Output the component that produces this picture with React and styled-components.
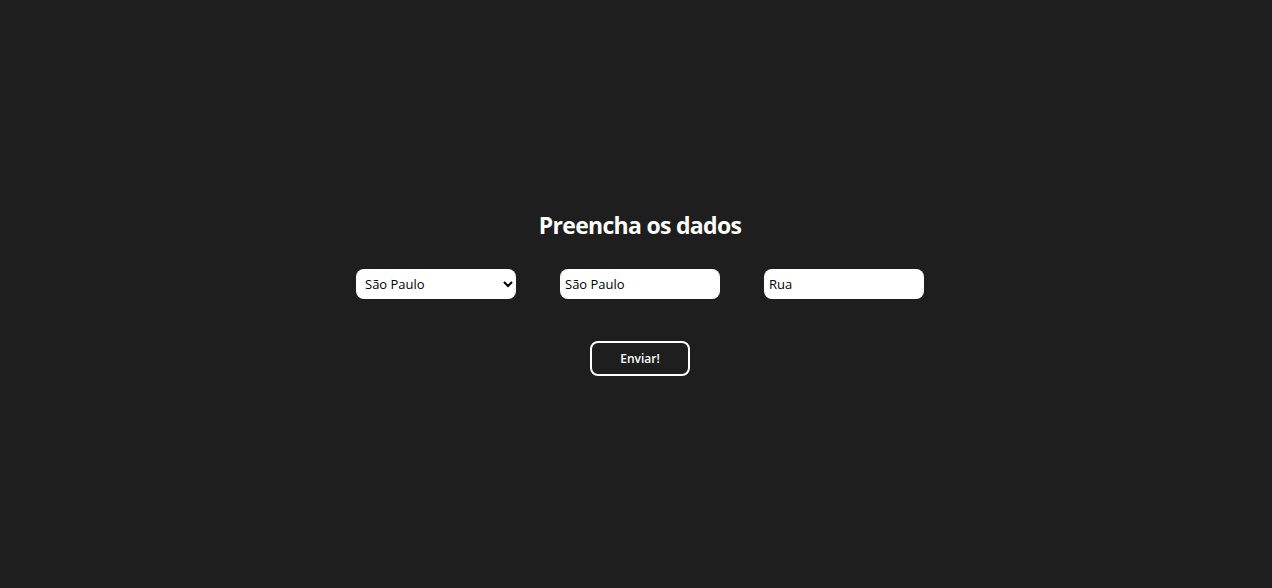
import { createGlobalStyle } from "styled-components";
import styled from "styled-components";

const GlobalStyle = createGlobalStyle`
  html, body {
    margin: 0;
    padding: 0;
    background: #1e1e1e;
  }
  * {
    box-sizing: border-box;
  }
`;

const Page = styled.main`
  min-height: 100vh;
  padding: 0 0 4px 8px;
  display: flex;
  flex-direction: column;
  align-items: center;
  justify-content: center;
  font-family: "Open Sans", "Noto Sans", sans-serif;
  color: #ffffff;
`;

const Title = styled.h1`
  margin: 0 0 28px;
  font-size: 23px;
  font-weight: 700;
  letter-spacing: -0.7px;
`;

const Fields = styled.div`
  display: flex;
  gap: 44px;
`;

const Select = styled.select`
  width: 160px;
  height: 30px;
  border: none;
  border-radius: 8px;
  padding: 0 4px 0 5px;
  font-family: "Open Sans", sans-serif;
  font-size: 13px;
  color: #000;
  background: #fff;
  outline: none;
`;

const Input = styled.input`
  width: 160px;
  height: 30px;
  border: none;
  border-radius: 8px;
  padding: 0 5px;
  font-family: "Open Sans", sans-serif;
  font-size: 13px;
  color: #000;
  background: #fff;
  outline: none;
`;

const Button = styled.button`
  margin-top: 42px;
  width: 100px;
  height: 35px;
  border: 2px solid #fff;
  border-radius: 8px;
  background: transparent;
  color: #fff;
  font-family: "Open Sans", sans-serif;
  font-size: 12px;
  font-weight: 600;
  cursor: pointer;
`;

export default function App() {
  return (
    <>
      <GlobalStyle />
      <Page>
        <Title>Preencha os dados</Title>
        <Fields>
          <Select defaultValue="SP">
            <option value="SP">São Paulo</option>
            <option value="RJ">Rio de Janeiro</option>
          </Select>
          <Input defaultValue="São Paulo" />
          <Input defaultValue="Rua" />
        </Fields>
        <Button>Enviar!</Button>
      </Page>
    </>
  );
}
